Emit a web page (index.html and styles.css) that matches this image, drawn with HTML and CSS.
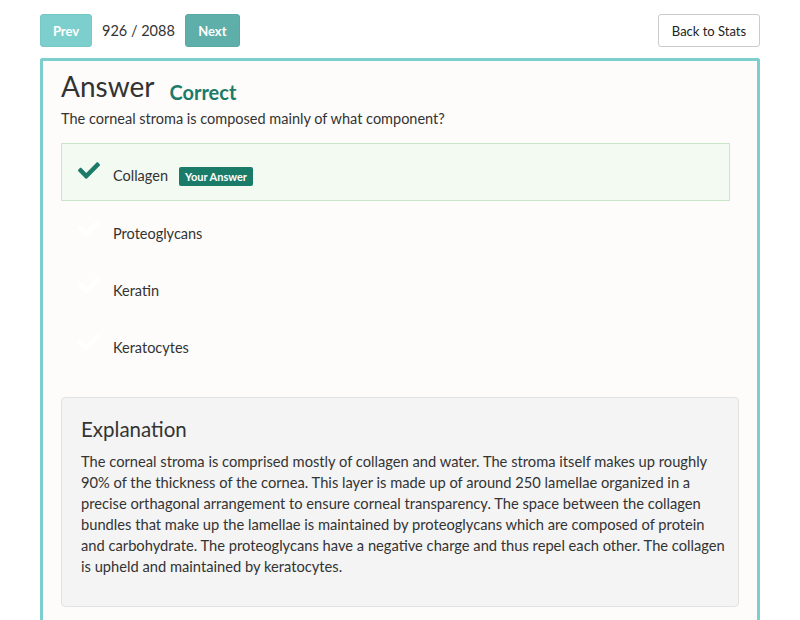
FILE: index.html
```html
<!DOCTYPE html>
<html>
<head>
<meta charset="utf-8">
<link rel="stylesheet" href="styles.css">
</head>
<body>
<div class="page">
  <div class="topbar">
    <div class="nav">
      <button class="btn btn-prev">Prev</button>
      <span class="counter">926 / 2088</span>
      <button class="btn btn-next">Next</button>
    </div>
    <button class="btn btn-back">Back to Stats</button>
  </div>
  <div class="card">
    <div class="title-row">
      <h1 class="title">Answer</h1>
      <span class="status">Correct</span>
    </div>
    <p class="question">The corneal stroma is composed mainly of what component?</p>
    <ul class="options">
      <li class="option selected">
        <svg class="check" viewBox="0 60 512 392" width="22" height="17"><path d="M173.898 439.404l-166.4-166.4c-9.997-9.997-9.997-26.206 0-36.204l36.203-36.204c9.997-9.998 26.207-9.998 36.204 0L192 312.69 432.095 72.596c9.997-9.997 26.207-9.997 36.204 0l36.203 36.204c9.997 9.997 9.997 26.206 0 36.204l-294.4 294.401c-9.998 9.997-26.207 9.997-36.204-.001z"/></svg>
        <span class="opt-text">Collagen</span>
        <span class="badge">Your Answer</span>
      </li>
      <li class="option">
        <svg class="check faint" viewBox="0 60 512 392" width="22" height="17"><path d="M173.898 439.404l-166.4-166.4c-9.997-9.997-9.997-26.206 0-36.204l36.203-36.204c9.997-9.998 26.207-9.998 36.204 0L192 312.69 432.095 72.596c9.997-9.997 26.207-9.997 36.204 0l36.203 36.204c9.997 9.997 9.997 26.206 0 36.204l-294.4 294.401c-9.998 9.997-26.207 9.997-36.204-.001z"/></svg>
        <span class="opt-text">Proteoglycans</span>
      </li>
      <li class="option">
        <svg class="check faint" viewBox="0 60 512 392" width="22" height="17"><path d="M173.898 439.404l-166.4-166.4c-9.997-9.997-9.997-26.206 0-36.204l36.203-36.204c9.997-9.998 26.207-9.998 36.204 0L192 312.69 432.095 72.596c9.997-9.997 26.207-9.997 36.204 0l36.203 36.204c9.997 9.997 9.997 26.206 0 36.204l-294.4 294.401c-9.998 9.997-26.207 9.997-36.204-.001z"/></svg>
        <span class="opt-text">Keratin</span>
      </li>
      <li class="option">
        <svg class="check faint" viewBox="0 60 512 392" width="22" height="17"><path d="M173.898 439.404l-166.4-166.4c-9.997-9.997-9.997-26.206 0-36.204l36.203-36.204c9.997-9.998 26.207-9.998 36.204 0L192 312.69 432.095 72.596c9.997-9.997 26.207-9.997 36.204 0l36.203 36.204c9.997 9.997 9.997 26.206 0 36.204l-294.4 294.401c-9.998 9.997-26.207 9.997-36.204-.001z"/></svg>
        <span class="opt-text">Keratocytes</span>
      </li>
    </ul>
    <div class="explanation">
      <h2 class="exp-title">Explanation</h2>
      <p class="exp-text">The corneal stroma is comprised mostly of collagen and water. The stroma itself makes up roughly<br>
90% of the thickness of the cornea. This layer is made up of around 250 lamellae organized in a<br>
precise orthagonal arrangement to ensure corneal transparency. The space between the collagen<br>
bundles that make up the lamellae is maintained by proteoglycans which are composed of protein<br>
and carbohydrate. The proteoglycans have a negative charge and thus repel each other. The collagen<br>
is upheld and maintained by keratocytes.</p>
    </div>
  </div>
</div>
</body>
</html>
```

FILE: styles.css
```css
* { box-sizing: border-box; }
html, body { margin: 0; padding: 0; background: #ffffff; }
body {
  font-family: Lato, "Open Sans", sans-serif;
  color: #333333;
  font-size: 14px;
}
.page {
  padding: 14px 40px 0 40px;
}
.topbar {
  display: flex;
  justify-content: space-between;
  align-items: center;
  height: 33px;
}
.nav {
  display: flex;
  align-items: center;
  gap: 10px;
}
.btn {
  font-family: Lato, sans-serif;
  height: 33px;
  border-radius: 3px;
  font-size: 13px;
  padding: 0 12px;
  cursor: pointer;
}
.btn-prev {
  background: #7dcfcd;
  border: 1px solid #75c8c6;
  color: #ffffff;
  font-weight: 700;
  width: 52px;
  padding: 0;
}
.btn-next {
  background: #5eaeaa;
  border: 1px solid #59a8a4;
  color: #ffffff;
  font-weight: 700;
  width: 55px;
  padding: 0;
}
.btn-back {
  background: #ffffff;
  border: 1px solid #cccccc;
  color: #222222;
  width: 102px;
  padding: 0;
}
.counter {
  font-size: 14.5px;
  color: #333333;
}
.card {
  margin-top: 11px;
  border: 3px solid #7dcfcd;
  border-bottom: none;
  border-radius: 3px 3px 0 0;
  background: #fdfcfa;
  padding: 6px 18px 20px 18px;
  min-height: 570px;
}
.title-row {
  display: flex;
  align-items: baseline;
  gap: 15px;
}
.title {
  margin: 0;
  font-size: 28px;
  font-weight: 400;
  line-height: 38px;
  color: #333333;
}
.status {
  font-size: 20px;
  font-weight: 700;
  color: #1b7b69;
  position: relative;
  top: 3px;
}
.question {
  margin: 4px 0 14px 0;
  font-size: 14.5px;
  line-height: 20px;
}
.options {
  list-style: none;
  margin: 0 9px 0 0;
  padding: 0;
}
.option {
  display: flex;
  align-items: center;
  height: 57px;
  padding: 7px 16px 0 16px;
  border: 1px solid transparent;
  font-size: 14.5px;
}
.option.selected {
  height: 58px;
  padding-top: 6px;
  background: #f3faf2;
  border-color: #c9e6c6;
}
.check {
  width: 22px;
  height: 17px;
  margin-right: 13px;
  position: relative;
  top: -5px;
}
.check path { fill: #1b7b69; }
.check.faint path { fill: #ffffff; }
.opt-text {
  color: #333333;
}
.badge {
  margin-left: 11px;
  background: #1b7b69;
  color: #ffffff;
  font-size: 11px;
  font-weight: 700;
  border-radius: 2px;
  padding: 3px 6px;
  line-height: 13px;
  position: relative;
  top: 1px;
}
.explanation {
  margin-top: 25px;
  background: #f4f4f4;
  border: 1px solid #e2e2e2;
  border-radius: 4px;
  padding: 17px 4px 29px 19px;
}
.exp-title {
  margin: 0 0 8px 0;
  font-size: 20.5px;
  font-weight: 400;
  line-height: 28px;
  color: #333333;
}
.exp-text {
  margin: 0;
  font-size: 14.7px;
  line-height: 21px;
  color: #333333;
}
```
